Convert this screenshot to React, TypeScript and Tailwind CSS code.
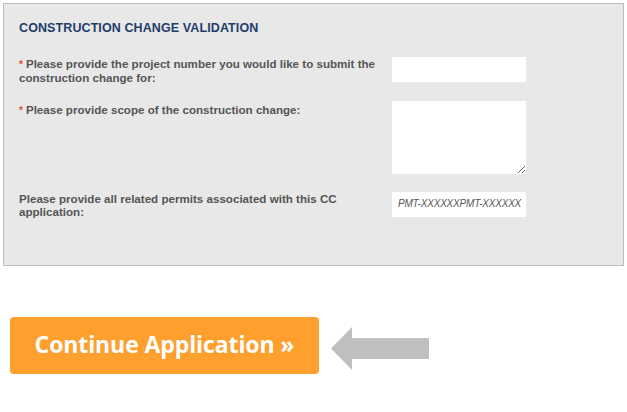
export default function App() {
  const label = "text-[11.6px] leading-[13px] font-bold text-[#555555]";
  const req = "before:content-['*'] before:text-[#e2542b] before:text-[10px] before:mr-[3px]";
  return (
    <div className="min-h-screen bg-white font-['Liberation_Sans',Arial,sans-serif]">
      {/* Validation panel */}
      <div className="ml-[3px] mt-[3px] w-[621px] h-[263px] border border-[#bdbdbd] bg-[#e8e8e8] px-[15px] pt-[15px]">
        <h2 className="text-[12.5px] font-bold text-[#1f3d6b] tracking-[0.1px]">
          CONSTRUCTION CHANGE VALIDATION
        </h2>

        <div className="mt-[19px] flex items-start">
          <p className={`${label} ${req} w-[373px]`}>
            Please provide the project number you would like to submit the construction change for:
          </p>
          <input className="w-[134px] h-[25px] bg-white outline-none" />
        </div>

        <div className="mt-[17px] flex items-start">
          <p className={`${label} ${req} w-[373px] pt-[2px]`}>
            Please provide scope of the construction change:
          </p>
          <textarea className="w-[134px] h-[73px] bg-white outline-none resize-y block" />
        </div>

        <div className="mt-[18px] flex items-start">
          <p className={`${label} w-[373px]`}>
            Please provide all related permits associated with this CC application:
          </p>
          <div className="w-[134px] h-[25px] bg-white overflow-hidden whitespace-nowrap px-[6px] pt-[6px] text-[10px] leading-[12px] italic text-[#555555] font-['Liberation_Sans_Narrow','Liberation_Sans',sans-serif] tracking-[-0.2px]">
            PMT-XXXXXXPMT-XXXXXX
          </div>
        </div>
      </div>

      {/* Continue button + pointer arrow */}
      <div className="mt-[51px] ml-[10px] flex items-center gap-[12px]">
        <button className="w-[309px] h-[57px] rounded-[4px] bg-[#ff9f2e] text-white text-[23px] font-bold font-['Open_Sans','Noto_Sans',sans-serif] tracking-[-0.1px] pb-[2px]">
          Continue Application »
        </button>
        <svg width="98" height="43" viewBox="0 0 98 43" className="mt-[5px]">
          <path d="M0 21.5 L21 0 L21 11 L98 11 L98 32 L21 32 L21 43 Z" fill="#bfbfbf" />
        </svg>
      </div>
    </div>
  );
}
